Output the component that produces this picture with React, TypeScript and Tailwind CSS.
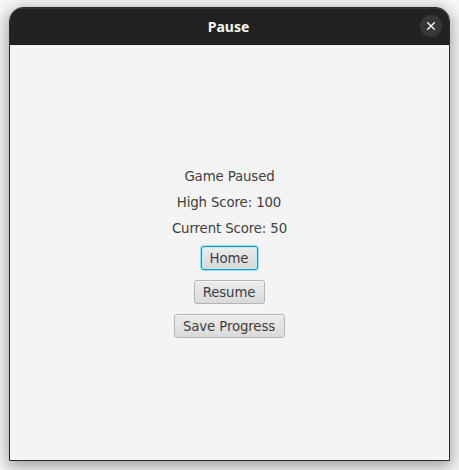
export default function App() {
  const btn = "flex h-6 items-center justify-center rounded-[3px] border border-[#b5b5b5] bg-linear-to-b from-[#ececec] to-[#dadada] pr-px pt-px shadow-[inset_0_1px_0_#f6f6f6,0_1px_0_#fafafa]";
  return (
    <div className="h-[470px] w-[459px] overflow-hidden bg-[#f8f8f8] pl-[9px] pt-[7px] font-['DejaVu_Sans',sans-serif] text-[13.33px] tracking-[-0.13px] text-[#404040]">
      <main className="flex h-[454px] w-[441px] flex-col overflow-hidden rounded-t-[14px] border border-[#2a2a2a] bg-[#f4f4f4] shadow-[0_4px_16px_2px_rgba(0,0,0,0.36)]">
        <header className="grid h-[37px] shrink-0 grid-cols-[1fr_auto_1fr] items-center border-b border-[#191919] bg-[#222] text-white shadow-[inset_0_1px_0_#343434]">
          <span />
          <h1 className="pr-[2px] pt-px font-['Noto_Sans',sans-serif] text-[14px] font-bold leading-5 tracking-normal text-[#f7f7f7]">Pause</h1>
          <button className="mr-[7px] flex size-[22px] items-center justify-center justify-self-end rounded-full bg-[#373737]">
            <svg viewBox="0 0 8 8" className="size-2" stroke="white" strokeWidth="1.3"><path d="M.2.2l7.6 7.6m0-7.6L.2 7.8" /></svg>
          </button>
        </header>
        <section className="flex flex-col items-center pt-[124px]">
          <p className="h-[15px] leading-[15px]">Game Paused</p>
          <p className="mt-[11px] h-[15px] pr-px leading-[15px]">High Score: 100</p>
          <p className="mt-[11px] h-[15px] leading-[15px]">Current Score: 50</p>
          <button className="mt-[10px] flex h-6 w-[57px] items-center justify-center rounded-[3px] border border-[#1d94bd] bg-linear-to-b from-[#ececec] to-[#d8d8d8] pr-px pt-px shadow-[0_0_0_1px_#95dff5,inset_0_0_0_1px_#c3e9f4]">Home</button>
          <button className={btn + " mt-[10px] w-[71px]"}>Resume</button>
          <button className={btn + " mt-[10px] w-[111px]"}>Save Progress</button>
        </section>
      </main>
    </div>
  );
}
